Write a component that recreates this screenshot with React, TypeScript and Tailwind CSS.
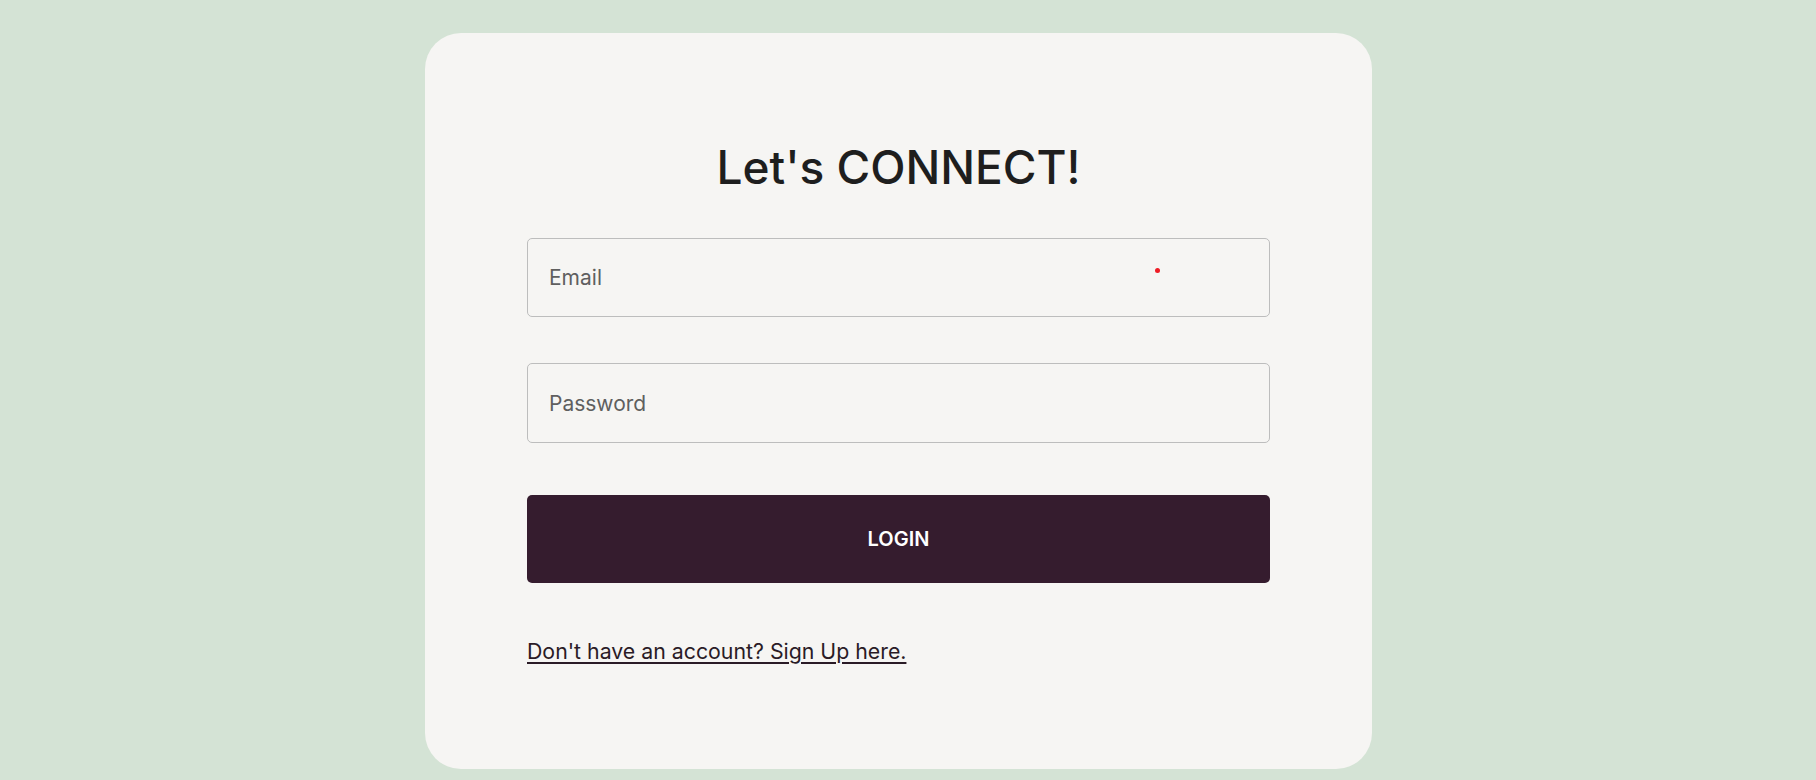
export default function App() {
  return (
    <div className="min-h-[780px] w-full bg-[#d4e3d5] pt-[33px]" style={{ fontFamily: 'Inter, "Noto Sans", sans-serif' }}>
      <div className="ml-[425px] flex h-[736px] w-[947px] flex-col rounded-[36px] bg-[#f6f5f3] px-[102px] pt-[105px]">
        <h1 className="text-center text-[46px] font-medium leading-[58px] text-[#1e1e1e]">Let's CONNECT!</h1>

        <div className="relative mt-[42px]">
          <input
            type="email"
            placeholder="Email"
            className="h-[79px] w-full rounded-[5px] border border-[#bdbdbd] bg-transparent px-[21px] text-[21px] text-[#333] placeholder:text-[#5f5f5f] outline-none"
          />
          <span className="absolute left-[628px] top-[30px] h-[5px] w-[5px] rounded-full bg-[#ee1c24]" />
        </div>

        <input
          type="password"
          placeholder="Password"
          className="mt-[46px] h-[80px] w-full rounded-[5px] border border-[#bdbdbd] bg-transparent px-[21px] text-[21px] text-[#333] placeholder:text-[#5f5f5f] outline-none"
        />

        <button className="mt-[52px] h-[88px] w-full rounded-[5px] bg-[#351c2e] text-[20px] font-semibold text-white">
          LOGIN
        </button>

        <a href="#" className="mt-[53px] self-start text-[21.3px] leading-[30px] text-[#2a1b26] underline underline-offset-[3px]">
          Don't have an account? Sign Up here.
        </a>
      </div>
    </div>
  )
}
